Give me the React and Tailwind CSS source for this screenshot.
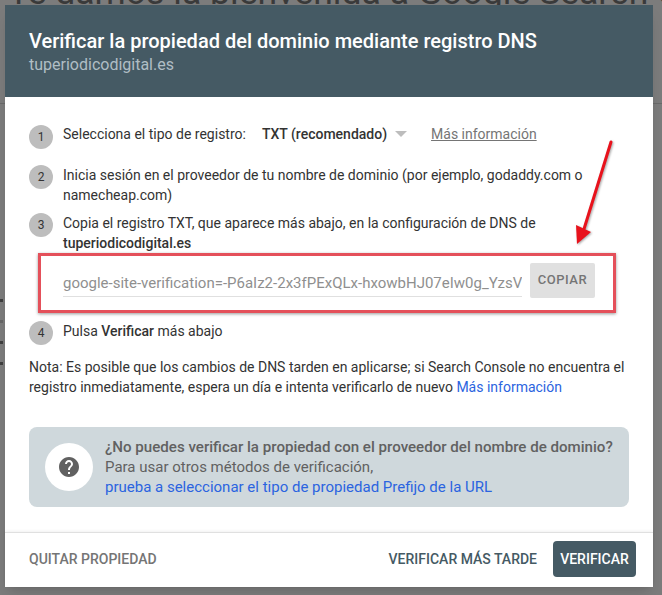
import React from 'react';

const Step = ({ n, children, className = '' }) => (
  <div className={`flex gap-[10px] ${className}`}>
    <div className="flex h-6 w-6 shrink-0 items-center justify-center rounded-full bg-[#bdbdbd] text-xs text-[#333]">{n}</div>
    <div className="leading-5">{children}</div>
  </div>
);

const App = () => {
  return (
    <div className="relative h-[595px] w-[662px] overflow-hidden bg-[#7c7c7c] font-['Roboto',sans-serif] text-sm text-[#333]">
      {/* page behind the dialog */}
      <div className="h-[129px] border-b border-[#6a6a6a]">
        <div className="-mt-[25px] whitespace-nowrap pl-[8px] text-[35.6px] leading-none text-[#3a3a3a]">Te damos la bienvenida a Google Search Console</div>
      </div>
      {/* bits of the page's text that stick out left of the dialog */}
      <div className="absolute left-0 top-[299px] flex w-[3px] flex-col gap-[18px]">
        <div className="h-[3px] bg-[#3f3f3f]" />
        <div className="h-[3px] bg-[#666]" />
        <div className="h-[3px] bg-[#3f3f3f]" />
        <div className="h-[3px] bg-[#3f3f3f]" />
      </div>

      {/* modal */}
      <div className="absolute left-[5px] top-[5px] flex h-[582px] w-[648px] flex-col bg-white shadow-lg">
        <div className="h-[92px] shrink-0 bg-[#455a64] px-6 pt-[24px]">
          <div className="text-xl font-medium leading-6 text-white">Verificar la propiedad del dominio mediante registro DNS</div>
          <div className="mt-[2px] text-base leading-5 text-[#b0bec5]">tuperiodicodigital.es</div>
        </div>

        <div className="flex-1 px-6 pt-[28px]">
          <Step n="1">
            <div className="-mt-px flex">
              <span>Selecciona el tipo de registro:</span>
              <span className="ml-[16px] font-medium">TXT (recomendado)</span>
              <span className="ml-2 mt-[7px] h-0 w-0 border-x-[6px] border-t-[6px] border-x-transparent border-t-[#bdbdbd]" />
              <a className="ml-[24px] text-[#757575] underline">Más información</a>
            </div>
          </Step>
          <Step n="2" className="mt-[16px]">
            Inicia sesión en el proveedor de tu nombre de dominio (por ejemplo, godaddy.com o namecheap.com)
          </Step>
          <Step n="3" className="mt-[8px]">
            Copia el registro TXT, que aparece más abajo, en la configuración de DNS de <b className="font-medium">tuperiodicodigital.es</b>
          </Step>

          <div className="ml-[9px] flex h-[60px] w-[578px] border-[3px] border-[#e4505a] pl-[22px] pt-[7px] shadow-[0_1px_3px_rgba(0,0,0,0.4)]">
            <div className="mt-[10px] h-[24px] w-[459px] overflow-hidden whitespace-nowrap border-b border-[#e0e0e0] text-[15px] leading-5 text-[#8f8f8f]">
              google-site-verification=-P6aIz2-2x3fPExQLx-hxowbHJ07eIw0g_YzsV
            </div>
            <button className="ml-[8px] h-[35px] w-[65px] rounded-[2px] bg-[#e0e0e0] text-[13px] font-medium tracking-[0.5px] text-[#757575]">COPIAR</button>
          </div>

          <Step n="4" className="mt-[8px]">
            Pulsa <b className="font-medium">Verificar</b> más abajo
          </Step>

          <p className="mt-[12px] leading-5">
            Nota: Es posible que los cambios de DNS tarden en aplicarse; si Search Console no encuentra el registro inmediatamente, espera un día e intenta verificarlo de nuevo <a className="text-[#2b64e0]">Más información</a>
          </p>

          <div className="mt-[30px] flex h-[80px] items-center gap-3 rounded-lg bg-[#cfd8dc] pl-4">
            <div className="flex h-12 w-12 items-center justify-center rounded-full bg-white">
              <svg width="24" height="24" viewBox="0 0 24 24" fill="#616161">
                <path d="M12 2C6.48 2 2 6.48 2 12s4.48 10 10 10 10-4.48 10-10S17.52 2 12 2zm1 17h-2v-2h2v2zm2.07-7.75l-.9.92C13.45 12.9 13 13.5 13 15h-2v-.5c0-1.1.45-2.1 1.17-2.83l1.24-1.26c.37-.36.59-.86.59-1.41 0-1.1-.9-2-2-2s-2 .9-2 2H8c0-2.21 1.79-4 4-4s4 1.79 4 4c0 .88-.36 1.68-.93 2.25z" />
              </svg>
            </div>
            <div className="text-[15px] leading-5 text-[#616161]">
              <div className="text-[15.1px] font-medium">¿No puedes verificar la propiedad con el proveedor del nombre de dominio?</div>
              <div>Para usar otros métodos de verificación,</div>
              <a className="text-[#2b64e0]">prueba a seleccionar el tipo de propiedad Prefijo de la URL</a>
            </div>
          </div>
        </div>

        <div className="flex h-[55px] shrink-0 items-center border-t border-[#e0e0e0] pb-[3px] pl-6 pr-[17px] text-sm font-medium shadow-[0_-1px_3px_rgba(0,0,0,0.06)]">
          <span className="text-[#757575]">QUITAR PROPIEDAD</span>
          <span className="ml-auto text-[#455a64]">VERIFICAR MÁS TARDE</span>
          <button className="ml-4 h-9 w-[83px] rounded bg-[#455a64] font-medium text-white">VERIFICAR</button>
        </div>
      </div>

      {/* red arrow pointing at the copied record */}
      <svg className="absolute left-[570px] top-[135px] drop-shadow-[1px_1px_1px_rgba(0,0,0,0.35)]" width="50" height="115" viewBox="0 0 50 115" fill="none">
        <path d="M41 7 L14 94" stroke="#e8121c" strokeWidth="3" strokeLinecap="round" />
        <path d="M6 90 L21 97 L7 109 Z" fill="#e8121c" />
      </svg>
    </div>
  );
};

export default App;
